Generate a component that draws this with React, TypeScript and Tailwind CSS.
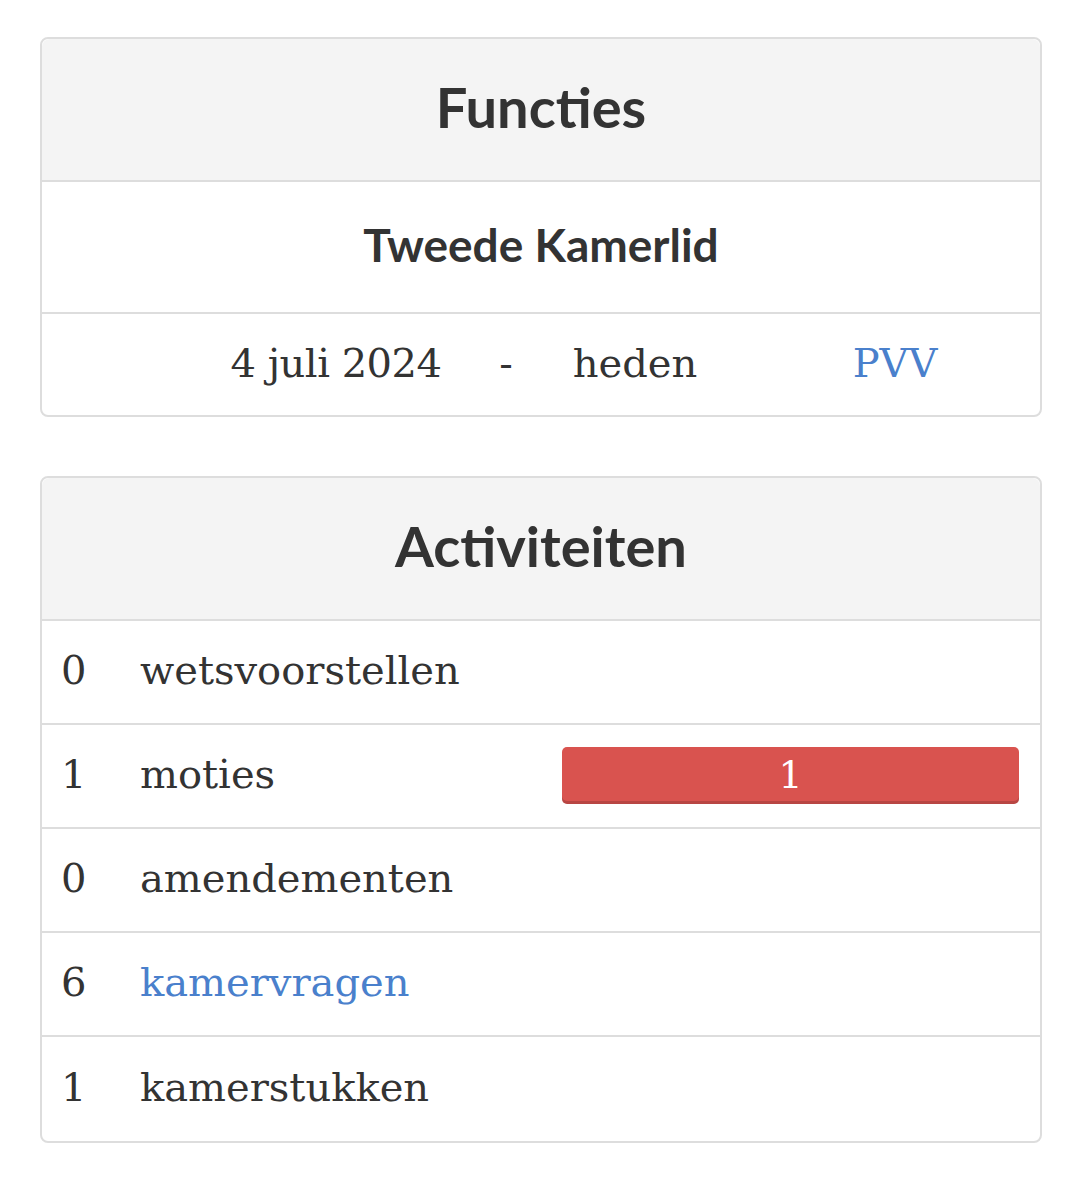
import React from "react";

const heading = { fontFamily: "Lato, 'Open Sans', sans-serif" };
const serif = { fontFamily: "'DejaVu Serif', 'Liberation Serif', serif" };

type Row = { count: number; label: string; link?: boolean; bar?: number };

const rows: Row[] = [
  { count: 0, label: "wetsvoorstellen" },
  { count: 1, label: "moties", bar: 1 },
  { count: 0, label: "amendementen" },
  { count: 6, label: "kamervragen", link: true },
  { count: 1, label: "kamerstukken" },
];

function CardHeader({ title }: { title: string }) {
  return (
    <div className="h-[143px] bg-[#f4f4f4] border-b-2 border-[#dddddd] flex items-center justify-center rounded-t-[8px] pb-[6px]">
      <h2 className="text-[56px] font-bold text-[#333333] leading-none" style={heading}>
        {title}
      </h2>
    </div>
  );
}

export default function App() {
  return (
    <div className="min-h-[1179px] bg-white px-[40px] pt-[37px] text-[#333333]">
      {/* Functies */}
      <section className="w-[1002px] border-2 border-[#dddddd] rounded-[8px]">
        <CardHeader title="Functies" />
        <div className="h-[132px] border-b-2 border-[#dddddd] flex items-center justify-center pb-[4px]">
          <span className="text-[46px] font-bold leading-none" style={heading}>
            Tweede Kamerlid
          </span>
        </div>
        <div className="h-[101px] flex items-center pl-[174px] pb-[4px] text-[40px] leading-none" style={serif}>
          <span className="w-[240px] text-center tracking-[-0.5px]">4 juli 2024</span>
          <span className="w-[100px] text-center">-</span>
          <span className="w-[158px] text-center">heden</span>
          <span className="ml-[81px] w-[200px] text-center text-[#4a80cc]">PVV</span>
        </div>
      </section>

      {/* Activiteiten */}
      <section className="mt-[59px] w-[1002px] border-2 border-[#dddddd] rounded-[8px]">
        <CardHeader title="Activiteiten" />
        {rows.map((r, i) => (
          <div
            key={r.label}
            className={
              "h-[104px] flex items-center pl-[19px] pr-[21px] pb-[4px] text-[40px] leading-none " +
              (i < rows.length - 1 ? "border-b-2 border-[#dddddd]" : "")
            }
            style={serif}
          >
            <span className="w-[79px]">{r.count}</span>
            <span className={r.link ? "text-[#4a80cc]" : ""}>{r.label}</span>
            {r.bar ? (
              <div className="ml-auto mt-[2px] w-[457px] h-[57px] rounded-[5px] bg-[#d9534f] shadow-[inset_0_-3px_0_rgba(0,0,0,0.15)] flex items-center justify-center text-white text-[38px]">
                {r.bar}
              </div>
            ) : null}
          </div>
        ))}
      </section>
    </div>
  );
}
